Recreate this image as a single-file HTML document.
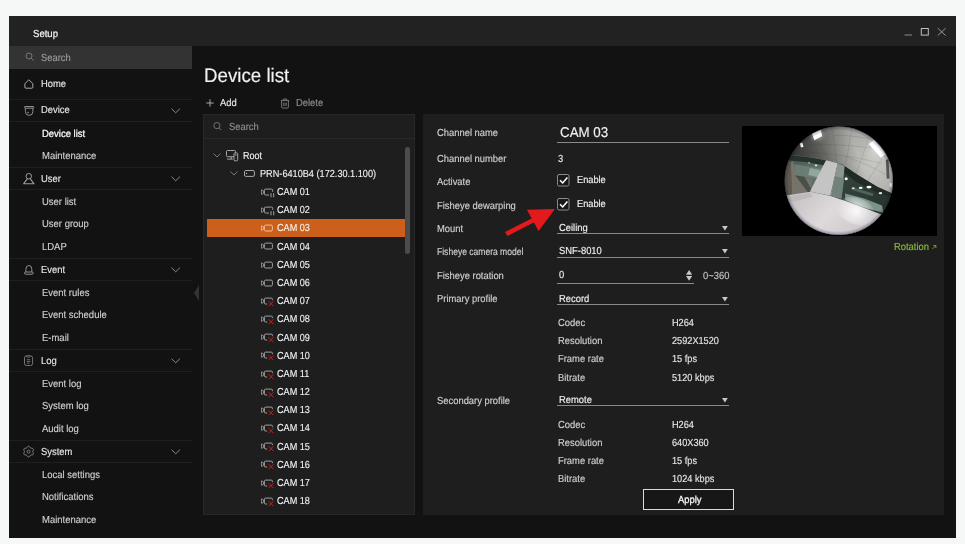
<!DOCTYPE html>
<html><head><meta charset="utf-8"><title>Setup</title><style>
*{box-sizing:border-box;margin:0;padding:0}
html,body{width:965px;height:544px;overflow:hidden}
body{background:#f6f8f8;font-family:"Liberation Sans",sans-serif;color:#d6d6d6;font-size:10.2px;position:relative;text-rendering:geometricPrecision}
.abs{position:absolute}
.t{position:absolute;white-space:nowrap;line-height:14px;height:14px;transform-origin:0 50%;-webkit-text-stroke:0.15px currentColor}
#win{position:absolute;left:9px;top:16px;width:947px;height:522.3px;background:#121212}
#title{position:absolute;left:0;top:0;width:947px;height:30px;background:#222222}
#side{position:absolute;left:0;top:30px;width:183px;height:492px;background:#121212}
.hr{position:absolute;left:0;width:183px;height:1px;background:#1f1f1f}
.panel{position:absolute;background:#1e1e1e}
.ul{position:absolute;height:1px;background:#8a8a8a}
svg{position:absolute;overflow:visible}
</style></head><body>
<div id="win"><div id="title"></div></div>
<div class="abs" style="left:9px;top:46px;width:183px;height:23px;background:#333333"></div>
<svg style="left:24.5px;top:52px" width="10" height="10" viewBox="0 0 10 10"><circle cx="4" cy="4" r="3" fill="none" stroke="#767676" stroke-width="1"/><path d="M6.2 6.2L8.6 8.6" stroke="#767676" stroke-width="1" fill="none"/></svg>
<div class="t" style="left:41px;top:52px;font-size:10.2px;color:#9a9a9a;font-weight:400;letter-spacing:0px;transform:scaleX(0.922);">Search</div>
<div class="t" style="left:32.5px;top:28px;font-size:10.2px;color:#f4f4f4;font-weight:400;letter-spacing:0px;transform:scaleX(0.94);-webkit-text-stroke:0.22px #f4f4f4;">Setup</div>
<svg style="left:900px;top:24px" width="50" height="16" viewBox="0 0 50 16"><path d="M4.5 11H12" stroke="#8c8c8c" stroke-width="1" fill="none"/><rect x="21.3" y="4.5" width="7" height="6.6" fill="none" stroke="#c0c0c0" stroke-width="1"/><path d="M37.7 4.2L45.7 11.6M45.7 4.2L37.7 11.6" stroke="#a0a0a0" stroke-width="0.9" fill="none"/></svg>
<svg style="left:24.1px;top:84px;margin-top:-5px" width="10" height="10" viewBox="0 0 10 10"><path d="M0.9 4.6L4.85 0.8L8.8 4.6V8.3Q8.8 9.2 7.9 9.2H1.8Q0.9 9.2 0.9 8.3Z" fill="none" stroke="#a8a8a8" stroke-width="1" stroke-linejoin="round"/></svg>
<div class="t" style="left:41px;top:78px;font-size:10.2px;color:#e4e4e4;font-weight:400;letter-spacing:0px;transform:scaleX(0.922);">Home</div>
<div class="hr" style="left:9px;top:98.75px"></div>
<svg style="left:23.5px;top:110.375px;margin-top:-4.6px" width="11" height="10" viewBox="0 0 11 10"><rect x="0.5" y="0.5" width="9.3" height="1.7" rx="0.6" fill="none" stroke="#909090" stroke-width="1"/><path d="M1.4 2.2V5.4Q1.4 9.4 5.15 9.4Q8.9 9.4 8.9 5.4V2.2" fill="none" stroke="#909090" stroke-width="1"/><circle cx="4.1" cy="6.5" r="0.65" fill="#b0b0b0"/></svg>
<div class="t" style="left:41px;top:104px;font-size:10.2px;color:#e4e4e4;font-weight:400;letter-spacing:0px;transform:scaleX(0.922);">Device</div>
<svg style="left:170.5px;top:107.875px" width="10" height="6" viewBox="0 0 10 6"><path d="M0.5 0.7L4.7 4.8L8.9 0.7" fill="none" stroke="#8c8c8c" stroke-width="1"/></svg>
<div class="hr" style="left:9px;top:121.0px"></div>
<div class="t" style="left:42.1px;top:128px;font-size:10.2px;color:#ffffff;font-weight:400;letter-spacing:0px;transform:scaleX(0.93);-webkit-text-stroke:0.24px #fff;">Device list</div>
<div class="t" style="left:42.1px;top:150px;font-size:10.2px;color:#cfcfcf;font-weight:400;letter-spacing:0px;transform:scaleX(0.93);">Maintenance</div>
<div class="hr" style="left:9px;top:167.1px"></div>
<svg style="left:22.8px;top:178.55px;margin-top:-5.9px" width="12" height="12" viewBox="0 0 12 12"><circle cx="5.75" cy="3.2" r="2.75" fill="none" stroke="#9c9c9c" stroke-width="1"/><path d="M4.5 5.7L0.7 10.7H10.9L7.1 5.7" fill="none" stroke="#9c9c9c" stroke-width="1.1" stroke-linejoin="round"/></svg>
<div class="t" style="left:41px;top:173px;font-size:10.2px;color:#e4e4e4;font-weight:400;letter-spacing:0px;transform:scaleX(0.922);">User</div>
<svg style="left:170.5px;top:176.05px" width="10" height="6" viewBox="0 0 10 6"><path d="M0.5 0.7L4.7 4.8L8.9 0.7" fill="none" stroke="#8c8c8c" stroke-width="1"/></svg>
<div class="hr" style="left:9px;top:189.0px"></div>
<div class="t" style="left:42.1px;top:196px;font-size:10.2px;color:#cfcfcf;font-weight:400;letter-spacing:0px;transform:scaleX(0.93);">User list</div>
<div class="t" style="left:42.1px;top:218px;font-size:10.2px;color:#cfcfcf;font-weight:400;letter-spacing:0px;transform:scaleX(0.93);">User group</div>
<div class="t" style="left:42.1px;top:241px;font-size:10.2px;color:#cfcfcf;font-weight:400;letter-spacing:0px;transform:scaleX(0.93);">LDAP</div>
<div class="hr" style="left:9px;top:258.0px"></div>
<svg style="left:23.8px;top:269.5px;margin-top:-4.4px" width="10" height="10" viewBox="0 0 10 10"><path d="M1.9 7V4.2Q1.9 0.5 4.85 0.5Q7.8 0.5 7.8 4.2V7" fill="none" stroke="#909090" stroke-width="1"/><rect x="0.5" y="7" width="8.7" height="2.2" rx="1" fill="none" stroke="#909090" stroke-width="1"/></svg>
<div class="t" style="left:41px;top:264px;font-size:10.2px;color:#e4e4e4;font-weight:400;letter-spacing:0px;transform:scaleX(0.922);">Event</div>
<svg style="left:170.5px;top:267.0px" width="10" height="6" viewBox="0 0 10 6"><path d="M0.5 0.7L4.7 4.8L8.9 0.7" fill="none" stroke="#8c8c8c" stroke-width="1"/></svg>
<div class="hr" style="left:9px;top:280.0px"></div>
<div class="t" style="left:42.1px;top:287px;font-size:10.2px;color:#cfcfcf;font-weight:400;letter-spacing:0px;transform:scaleX(0.93);">Event rules</div>
<div class="t" style="left:42.1px;top:309px;font-size:10.2px;color:#cfcfcf;font-weight:400;letter-spacing:0px;transform:scaleX(0.93);">Event schedule</div>
<div class="t" style="left:42.1px;top:332px;font-size:10.2px;color:#cfcfcf;font-weight:400;letter-spacing:0px;transform:scaleX(0.93);">E-mail</div>
<div class="hr" style="left:9px;top:349.0px"></div>
<svg style="left:24.1px;top:360.5px;margin-top:-5.5px" width="10" height="11" viewBox="0 0 10 11"><rect x="0.5" y="0.9" width="8.1" height="9.6" rx="2" fill="none" stroke="#767676" stroke-width="1"/><ellipse cx="4.55" cy="1.4" rx="1.9" ry="0.8" fill="#121212" stroke="#767676" stroke-width="0.9"/><path d="M2.8 4.7H6.2M2.8 6.4H6.4M2.8 8.1H5.4" fill="none" stroke="#6a6a6a" stroke-width="1"/></svg>
<div class="t" style="left:41px;top:355px;font-size:10.2px;color:#e4e4e4;font-weight:400;letter-spacing:0px;transform:scaleX(0.922);">Log</div>
<svg style="left:170.5px;top:358.0px" width="10" height="6" viewBox="0 0 10 6"><path d="M0.5 0.7L4.7 4.8L8.9 0.7" fill="none" stroke="#8c8c8c" stroke-width="1"/></svg>
<div class="hr" style="left:9px;top:371.0px"></div>
<div class="t" style="left:42.1px;top:378px;font-size:10.2px;color:#cfcfcf;font-weight:400;letter-spacing:0px;transform:scaleX(0.93);">Event log</div>
<div class="t" style="left:42.1px;top:400px;font-size:10.2px;color:#cfcfcf;font-weight:400;letter-spacing:0px;transform:scaleX(0.93);">System log</div>
<div class="t" style="left:42.1px;top:423px;font-size:10.2px;color:#cfcfcf;font-weight:400;letter-spacing:0px;transform:scaleX(0.93);">Audit log</div>
<div class="hr" style="left:9px;top:440.0px"></div>
<svg style="left:23.15px;top:451.5px;margin-top:-5.5px" width="11.2" height="11.2" viewBox="0 0 11.2 11.2"><path d="M5.60 0.23L6.06 0.33L6.48 0.62L6.83 1.01L7.12 1.43L7.38 1.78L7.66 2.02L8.02 2.15L8.45 2.20L8.96 2.24L9.48 2.35L9.93 2.57L10.25 2.91L10.39 3.37L10.35 3.87L10.19 4.37L9.97 4.83L9.80 5.23L9.73 5.60L9.80 5.97L9.97 6.37L10.19 6.83L10.35 7.33L10.39 7.83L10.25 8.28L9.93 8.63L9.48 8.85L8.96 8.96L8.45 9.00L8.02 9.05L7.67 9.18L7.38 9.42L7.12 9.77L6.83 10.19L6.48 10.58L6.06 10.87L5.60 10.97L5.14 10.87L4.72 10.58L4.37 10.19L4.08 9.77L3.82 9.42L3.53 9.18L3.18 9.05L2.75 9.00L2.24 8.96L1.72 8.85L1.27 8.63L0.95 8.29L0.81 7.83L0.85 7.33L1.01 6.83L1.23 6.37L1.40 5.97L1.47 5.60L1.40 5.23L1.23 4.83L1.01 4.37L0.85 3.87L0.81 3.37L0.95 2.92L1.27 2.57L1.72 2.35L2.24 2.24L2.75 2.20L3.18 2.15L3.54 2.02L3.82 1.78L4.08 1.43L4.37 1.01L4.72 0.62L5.14 0.33Z" fill="none" stroke="#868686" stroke-width="1" stroke-linejoin="round"/><circle cx="5.6" cy="5.6" r="1.5" fill="none" stroke="#868686" stroke-width="0.9"/></svg>
<div class="t" style="left:41px;top:446px;font-size:10.2px;color:#e4e4e4;font-weight:400;letter-spacing:0px;transform:scaleX(0.922);">System</div>
<svg style="left:170.5px;top:449.0px" width="10" height="6" viewBox="0 0 10 6"><path d="M0.5 0.7L4.7 4.8L8.9 0.7" fill="none" stroke="#8c8c8c" stroke-width="1"/></svg>
<div class="hr" style="left:9px;top:462.0px"></div>
<div class="t" style="left:42.1px;top:469px;font-size:10.2px;color:#cfcfcf;font-weight:400;letter-spacing:0px;transform:scaleX(0.93);">Local settings</div>
<div class="t" style="left:42.1px;top:491px;font-size:10.2px;color:#cfcfcf;font-weight:400;letter-spacing:0px;transform:scaleX(0.93);">Notifications</div>
<div class="t" style="left:42.1px;top:514px;font-size:10.2px;color:#cfcfcf;font-weight:400;letter-spacing:0px;transform:scaleX(0.93);">Maintenance</div>
<svg style="left:193.7px;top:285px" width="5" height="16" viewBox="0 0 5 16"><path d="M5 0V16L0 8Z" fill="#333333"/></svg>
<div class="t" style="left:204px;top:69px;font-size:19.5px;color:#f2f2f2;font-weight:400;letter-spacing:0px;transform:scaleX(0.96);">Device list</div>
<svg style="left:206px;top:99px" width="8" height="8" viewBox="0 0 8 8"><path d="M4 0.3V7.7M0.3 4H7.7" stroke="#b8b8b8" stroke-width="0.9" fill="none"/></svg>
<div class="t" style="left:219.7px;top:97px;font-size:10.2px;color:#e6e6e6;font-weight:400;letter-spacing:0px;transform:scaleX(0.922);">Add</div>
<svg style="left:280.4px;top:97.6px" width="10" height="11" viewBox="0 0 10 11"><path d="M0.8 2.5H9.2M3.3 2.5V1H6.7V2.5M1.6 2.5V9Q1.6 10 2.6 10H7.4Q8.4 10 8.4 9V2.5" fill="none" stroke="#747474" stroke-width="1"/><path d="M3.3 4.6H4.5V8H3.3ZM5.5 4.6H6.7V8H5.5Z" fill="#747474"/></svg>
<div class="t" style="left:296.2px;top:97px;font-size:10.2px;color:#8e8e8e;font-weight:400;letter-spacing:0px;transform:scaleX(0.922);">Delete</div>
<div class="panel" style="left:203px;top:113.9px;width:212px;height:400.7px;border:1px solid #272727"></div>
<div class="abs" style="left:203px;top:137.7px;width:212px;height:1px;background:#282828"></div>
<svg style="left:213px;top:122px" width="9" height="9" viewBox="0 0 9 9"><circle cx="3.9" cy="3.6" r="3.1" fill="none" stroke="#707070" stroke-width="1"/><path d="M6.1 5.9L8.3 8.1" stroke="#707070" stroke-width="1" fill="none"/></svg>
<div class="t" style="left:228.5px;top:121px;font-size:10.2px;color:#8e8e8e;font-weight:400;letter-spacing:0px;transform:scaleX(0.922);">Search</div>
<div class="abs" style="left:405px;top:146.7px;width:5.2px;height:107px;background:#4c4c4c;border-radius:2.6px"></div>
<svg style="left:213px;top:153.0px" width="8" height="5" viewBox="0 0 8 5"><path d="M0.5 0.5L4 4L7.5 0.5" fill="none" stroke="#777" stroke-width="1"/></svg>
<svg style="left:226px;top:149.5px" width="12.5" height="11.5" viewBox="0 0 12.5 11.5"><rect x="0.5" y="0.5" width="9.1" height="6.2" rx="1" fill="none" stroke="#a6a6a6" stroke-width="1"/><path d="M1 9.1H6.8M5.2 6.7V9.1" fill="none" stroke="#a6a6a6" stroke-width="1"/><rect x="8" y="2.9" width="3.7" height="7.9" rx="1" fill="#1e1e1e" stroke="#a6a6a6" stroke-width="1"/><circle cx="9.85" cy="4.9" r="0.6" fill="#e0e0e0"/></svg>
<div class="t" style="left:242.8px;top:150px;font-size:10.2px;color:#f2f2f2;font-weight:400;letter-spacing:0px;transform:scaleX(0.885);-webkit-text-stroke:0.12px #f2f2f2;">Root</div>
<svg style="left:230px;top:171.17000000000002px" width="8" height="5" viewBox="0 0 8 5"><path d="M0.5 0.5L4 4L7.5 0.5" fill="none" stroke="#777" stroke-width="1"/></svg>
<svg style="left:244px;top:170.37px" width="11" height="7" viewBox="0 0 11 7"><rect x="0.5" y="0.5" width="9.9" height="5.9" rx="1.4" fill="none" stroke="#a8a8a8" stroke-width="1"/><circle cx="2.6" cy="3.45" r="0.6" fill="#d0d0d0"/></svg>
<div class="t" style="left:259.5px;top:168px;font-size:10.2px;color:#f2f2f2;font-weight:400;letter-spacing:0px;transform:scaleX(0.899);-webkit-text-stroke:0.12px #f2f2f2;">PRN-6410B4 (172.30.1.100)</div>
<svg style="left:260.5px;top:187.84px" width="14" height="10" viewBox="0 0 14 10"><path d="M0.5 1.8V6.4L2.5 5.4V2.8Z" fill="none" stroke="#a0a0a0" stroke-width="0.8" stroke-linejoin="round"/><path d="M8 7H4.5Q3.4 7 3.4 5.9V2.2Q3.4 1.1 4.5 1.1H10.6Q11.7 1.1 11.7 2.2V3.8" fill="none" stroke="#a0a0a0" stroke-width="1"/><path d="M10 5.2V9.3M12.7 5.2V9.3" stroke="#a0a0a0" stroke-width="1"/></svg>
<div class="t" style="left:277.2px;top:186px;font-size:10.2px;color:#f2f2f2;font-weight:400;letter-spacing:0px;transform:scaleX(0.895);-webkit-text-stroke:0.12px #f2f2f2;">CAM 01</div>
<svg style="left:260.5px;top:206.01px" width="14" height="10" viewBox="0 0 14 10"><path d="M0.5 1.8V6.4L2.5 5.4V2.8Z" fill="none" stroke="#a0a0a0" stroke-width="0.8" stroke-linejoin="round"/><path d="M8 7H4.5Q3.4 7 3.4 5.9V2.2Q3.4 1.1 4.5 1.1H10.6Q11.7 1.1 11.7 2.2V3.8" fill="none" stroke="#a0a0a0" stroke-width="1"/><path d="M10 5.2V9.3M12.7 5.2V9.3" stroke="#a0a0a0" stroke-width="1"/></svg>
<div class="t" style="left:277.2px;top:204px;font-size:10.2px;color:#f2f2f2;font-weight:400;letter-spacing:0px;transform:scaleX(0.895);-webkit-text-stroke:0.12px #f2f2f2;">CAM 02</div>
<div class="abs" style="left:207.25px;top:219.48px;width:198px;height:17.6px;background:#cc601a"></div>
<svg style="left:260.5px;top:224.18px" width="14" height="10" viewBox="0 0 14 10"><path d="M0.5 1.8V6.4L2.5 5.4V2.8Z" fill="none" stroke="#ecc0a2" stroke-width="0.8" stroke-linejoin="round"/><rect x="3.4" y="1.1" width="8" height="5.9" rx="1.3" fill="none" stroke="#ecc0a2" stroke-width="1"/></svg>
<div class="t" style="left:277.2px;top:222px;font-size:10.2px;color:#f2f2f2;font-weight:400;letter-spacing:0px;transform:scaleX(0.895);-webkit-text-stroke:0.12px #f2f2f2;">CAM 03</div>
<svg style="left:260.5px;top:242.35px" width="14" height="10" viewBox="0 0 14 10"><path d="M0.5 1.8V6.4L2.5 5.4V2.8Z" fill="none" stroke="#a0a0a0" stroke-width="0.8" stroke-linejoin="round"/><rect x="3.4" y="1.1" width="8" height="5.9" rx="1.3" fill="none" stroke="#a0a0a0" stroke-width="1"/></svg>
<div class="t" style="left:277.2px;top:241px;font-size:10.2px;color:#f2f2f2;font-weight:400;letter-spacing:0px;transform:scaleX(0.895);-webkit-text-stroke:0.12px #f2f2f2;">CAM 04</div>
<svg style="left:260.5px;top:260.52px" width="14" height="10" viewBox="0 0 14 10"><path d="M0.5 1.8V6.4L2.5 5.4V2.8Z" fill="none" stroke="#a0a0a0" stroke-width="0.8" stroke-linejoin="round"/><rect x="3.4" y="1.1" width="8" height="5.9" rx="1.3" fill="none" stroke="#a0a0a0" stroke-width="1"/></svg>
<div class="t" style="left:277.2px;top:259px;font-size:10.2px;color:#f2f2f2;font-weight:400;letter-spacing:0px;transform:scaleX(0.895);-webkit-text-stroke:0.12px #f2f2f2;">CAM 05</div>
<svg style="left:260.5px;top:278.69px" width="14" height="10" viewBox="0 0 14 10"><path d="M0.5 1.8V6.4L2.5 5.4V2.8Z" fill="none" stroke="#a0a0a0" stroke-width="0.8" stroke-linejoin="round"/><rect x="3.4" y="1.1" width="8" height="5.9" rx="1.3" fill="none" stroke="#a0a0a0" stroke-width="1"/></svg>
<div class="t" style="left:277.2px;top:277px;font-size:10.2px;color:#f2f2f2;font-weight:400;letter-spacing:0px;transform:scaleX(0.895);-webkit-text-stroke:0.12px #f2f2f2;">CAM 06</div>
<svg style="left:260.5px;top:296.86px" width="14" height="10" viewBox="0 0 14 10"><path d="M0.5 1.8V6.4L2.5 5.4V2.8Z" fill="none" stroke="#a0a0a0" stroke-width="0.8" stroke-linejoin="round"/><path d="M6.2 7H4.5Q3.4 7 3.4 5.9V2.2Q3.4 1.1 4.5 1.1H10.3Q11.4 1.1 11.4 2.2V3.2" fill="none" stroke="#a0a0a0" stroke-width="1"/><path d="M7.7 4.3L12.4 9.1M12.4 4.3L7.7 9.1" stroke="#e01818" stroke-width="0.95"/></svg>
<div class="t" style="left:277.2px;top:295px;font-size:10.2px;color:#f2f2f2;font-weight:400;letter-spacing:0px;transform:scaleX(0.895);-webkit-text-stroke:0.12px #f2f2f2;">CAM 07</div>
<svg style="left:260.5px;top:315.03px" width="14" height="10" viewBox="0 0 14 10"><path d="M0.5 1.8V6.4L2.5 5.4V2.8Z" fill="none" stroke="#a0a0a0" stroke-width="0.8" stroke-linejoin="round"/><path d="M6.2 7H4.5Q3.4 7 3.4 5.9V2.2Q3.4 1.1 4.5 1.1H10.3Q11.4 1.1 11.4 2.2V3.2" fill="none" stroke="#a0a0a0" stroke-width="1"/><path d="M7.7 4.3L12.4 9.1M12.4 4.3L7.7 9.1" stroke="#e01818" stroke-width="0.95"/></svg>
<div class="t" style="left:277.2px;top:313px;font-size:10.2px;color:#f2f2f2;font-weight:400;letter-spacing:0px;transform:scaleX(0.895);-webkit-text-stroke:0.12px #f2f2f2;">CAM 08</div>
<svg style="left:260.5px;top:333.20px" width="14" height="10" viewBox="0 0 14 10"><path d="M0.5 1.8V6.4L2.5 5.4V2.8Z" fill="none" stroke="#a0a0a0" stroke-width="0.8" stroke-linejoin="round"/><path d="M6.2 7H4.5Q3.4 7 3.4 5.9V2.2Q3.4 1.1 4.5 1.1H10.3Q11.4 1.1 11.4 2.2V3.2" fill="none" stroke="#a0a0a0" stroke-width="1"/><path d="M7.7 4.3L12.4 9.1M12.4 4.3L7.7 9.1" stroke="#e01818" stroke-width="0.95"/></svg>
<div class="t" style="left:277.2px;top:332px;font-size:10.2px;color:#f2f2f2;font-weight:400;letter-spacing:0px;transform:scaleX(0.895);-webkit-text-stroke:0.12px #f2f2f2;">CAM 09</div>
<svg style="left:260.5px;top:351.37px" width="14" height="10" viewBox="0 0 14 10"><path d="M0.5 1.8V6.4L2.5 5.4V2.8Z" fill="none" stroke="#a0a0a0" stroke-width="0.8" stroke-linejoin="round"/><path d="M6.2 7H4.5Q3.4 7 3.4 5.9V2.2Q3.4 1.1 4.5 1.1H10.3Q11.4 1.1 11.4 2.2V3.2" fill="none" stroke="#a0a0a0" stroke-width="1"/><path d="M7.7 4.3L12.4 9.1M12.4 4.3L7.7 9.1" stroke="#e01818" stroke-width="0.95"/></svg>
<div class="t" style="left:277.2px;top:350px;font-size:10.2px;color:#f2f2f2;font-weight:400;letter-spacing:0px;transform:scaleX(0.895);-webkit-text-stroke:0.12px #f2f2f2;">CAM 10</div>
<svg style="left:260.5px;top:369.54px" width="14" height="10" viewBox="0 0 14 10"><path d="M0.5 1.8V6.4L2.5 5.4V2.8Z" fill="none" stroke="#a0a0a0" stroke-width="0.8" stroke-linejoin="round"/><path d="M6.2 7H4.5Q3.4 7 3.4 5.9V2.2Q3.4 1.1 4.5 1.1H10.3Q11.4 1.1 11.4 2.2V3.2" fill="none" stroke="#a0a0a0" stroke-width="1"/><path d="M7.7 4.3L12.4 9.1M12.4 4.3L7.7 9.1" stroke="#e01818" stroke-width="0.95"/></svg>
<div class="t" style="left:277.2px;top:368px;font-size:10.2px;color:#f2f2f2;font-weight:400;letter-spacing:0px;transform:scaleX(0.895);-webkit-text-stroke:0.12px #f2f2f2;">CAM 11</div>
<svg style="left:260.5px;top:387.71px" width="14" height="10" viewBox="0 0 14 10"><path d="M0.5 1.8V6.4L2.5 5.4V2.8Z" fill="none" stroke="#a0a0a0" stroke-width="0.8" stroke-linejoin="round"/><path d="M6.2 7H4.5Q3.4 7 3.4 5.9V2.2Q3.4 1.1 4.5 1.1H10.3Q11.4 1.1 11.4 2.2V3.2" fill="none" stroke="#a0a0a0" stroke-width="1"/><path d="M7.7 4.3L12.4 9.1M12.4 4.3L7.7 9.1" stroke="#e01818" stroke-width="0.95"/></svg>
<div class="t" style="left:277.2px;top:386px;font-size:10.2px;color:#f2f2f2;font-weight:400;letter-spacing:0px;transform:scaleX(0.895);-webkit-text-stroke:0.12px #f2f2f2;">CAM 12</div>
<svg style="left:260.5px;top:405.88px" width="14" height="10" viewBox="0 0 14 10"><path d="M0.5 1.8V6.4L2.5 5.4V2.8Z" fill="none" stroke="#a0a0a0" stroke-width="0.8" stroke-linejoin="round"/><path d="M6.2 7H4.5Q3.4 7 3.4 5.9V2.2Q3.4 1.1 4.5 1.1H10.3Q11.4 1.1 11.4 2.2V3.2" fill="none" stroke="#a0a0a0" stroke-width="1"/><path d="M7.7 4.3L12.4 9.1M12.4 4.3L7.7 9.1" stroke="#e01818" stroke-width="0.95"/></svg>
<div class="t" style="left:277.2px;top:404px;font-size:10.2px;color:#f2f2f2;font-weight:400;letter-spacing:0px;transform:scaleX(0.895);-webkit-text-stroke:0.12px #f2f2f2;">CAM 13</div>
<svg style="left:260.5px;top:424.05px" width="14" height="10" viewBox="0 0 14 10"><path d="M0.5 1.8V6.4L2.5 5.4V2.8Z" fill="none" stroke="#a0a0a0" stroke-width="0.8" stroke-linejoin="round"/><path d="M6.2 7H4.5Q3.4 7 3.4 5.9V2.2Q3.4 1.1 4.5 1.1H10.3Q11.4 1.1 11.4 2.2V3.2" fill="none" stroke="#a0a0a0" stroke-width="1"/><path d="M7.7 4.3L12.4 9.1M12.4 4.3L7.7 9.1" stroke="#e01818" stroke-width="0.95"/></svg>
<div class="t" style="left:277.2px;top:422px;font-size:10.2px;color:#f2f2f2;font-weight:400;letter-spacing:0px;transform:scaleX(0.895);-webkit-text-stroke:0.12px #f2f2f2;">CAM 14</div>
<svg style="left:260.5px;top:442.22px" width="14" height="10" viewBox="0 0 14 10"><path d="M0.5 1.8V6.4L2.5 5.4V2.8Z" fill="none" stroke="#a0a0a0" stroke-width="0.8" stroke-linejoin="round"/><path d="M6.2 7H4.5Q3.4 7 3.4 5.9V2.2Q3.4 1.1 4.5 1.1H10.3Q11.4 1.1 11.4 2.2V3.2" fill="none" stroke="#a0a0a0" stroke-width="1"/><path d="M7.7 4.3L12.4 9.1M12.4 4.3L7.7 9.1" stroke="#e01818" stroke-width="0.95"/></svg>
<div class="t" style="left:277.2px;top:441px;font-size:10.2px;color:#f2f2f2;font-weight:400;letter-spacing:0px;transform:scaleX(0.895);-webkit-text-stroke:0.12px #f2f2f2;">CAM 15</div>
<svg style="left:260.5px;top:460.39px" width="14" height="10" viewBox="0 0 14 10"><path d="M0.5 1.8V6.4L2.5 5.4V2.8Z" fill="none" stroke="#a0a0a0" stroke-width="0.8" stroke-linejoin="round"/><path d="M6.2 7H4.5Q3.4 7 3.4 5.9V2.2Q3.4 1.1 4.5 1.1H10.3Q11.4 1.1 11.4 2.2V3.2" fill="none" stroke="#a0a0a0" stroke-width="1"/><path d="M7.7 4.3L12.4 9.1M12.4 4.3L7.7 9.1" stroke="#e01818" stroke-width="0.95"/></svg>
<div class="t" style="left:277.2px;top:459px;font-size:10.2px;color:#f2f2f2;font-weight:400;letter-spacing:0px;transform:scaleX(0.895);-webkit-text-stroke:0.12px #f2f2f2;">CAM 16</div>
<svg style="left:260.5px;top:478.56px" width="14" height="10" viewBox="0 0 14 10"><path d="M0.5 1.8V6.4L2.5 5.4V2.8Z" fill="none" stroke="#a0a0a0" stroke-width="0.8" stroke-linejoin="round"/><path d="M6.2 7H4.5Q3.4 7 3.4 5.9V2.2Q3.4 1.1 4.5 1.1H10.3Q11.4 1.1 11.4 2.2V3.2" fill="none" stroke="#a0a0a0" stroke-width="1"/><path d="M7.7 4.3L12.4 9.1M12.4 4.3L7.7 9.1" stroke="#e01818" stroke-width="0.95"/></svg>
<div class="t" style="left:277.2px;top:477px;font-size:10.2px;color:#f2f2f2;font-weight:400;letter-spacing:0px;transform:scaleX(0.895);-webkit-text-stroke:0.12px #f2f2f2;">CAM 17</div>
<svg style="left:260.5px;top:496.73px" width="14" height="10" viewBox="0 0 14 10"><path d="M0.5 1.8V6.4L2.5 5.4V2.8Z" fill="none" stroke="#a0a0a0" stroke-width="0.8" stroke-linejoin="round"/><path d="M6.2 7H4.5Q3.4 7 3.4 5.9V2.2Q3.4 1.1 4.5 1.1H10.3Q11.4 1.1 11.4 2.2V3.2" fill="none" stroke="#a0a0a0" stroke-width="1"/><path d="M7.7 4.3L12.4 9.1M12.4 4.3L7.7 9.1" stroke="#e01818" stroke-width="0.95"/></svg>
<div class="t" style="left:277.2px;top:495px;font-size:10.2px;color:#f2f2f2;font-weight:400;letter-spacing:0px;transform:scaleX(0.895);-webkit-text-stroke:0.12px #f2f2f2;">CAM 18</div>
<div class="panel" style="left:423px;top:113.9px;width:521px;height:400.8px"></div>
<div class="t" style="left:436.6px;top:127px;font-size:10.2px;color:#d0d0d0;font-weight:400;letter-spacing:0px;transform:scaleX(0.922);">Channel name</div>
<div class="t" style="left:559.5px;top:126px;font-size:14.2px;color:#f0f0f0;font-weight:400;letter-spacing:0px;transform:scaleX(0.94);">CAM 03</div>
<div class="ul" style="left:556.8px;top:141.7px;width:172.6px"></div>
<div class="t" style="left:436.6px;top:153px;font-size:10.2px;color:#d0d0d0;font-weight:400;letter-spacing:0px;transform:scaleX(0.922);">Channel number</div>
<div class="t" style="left:558px;top:153px;font-size:10.2px;color:#e6e6e6;font-weight:400;letter-spacing:0px;transform:scaleX(0.922);">3</div>
<div class="t" style="left:436.6px;top:176px;font-size:10.2px;color:#d0d0d0;font-weight:400;letter-spacing:0px;transform:scaleX(0.922);">Activate</div>
<svg style="left:556.5px;top:174.2px" width="12.5" height="12.5" viewBox="0 0 12.5 12.5"><rect x="0.5" y="0.5" width="11.5" height="11.5" rx="1.5" fill="#191919" stroke="#8c8c8c" stroke-width="1"/><path d="M3 6.2L5.7 9L10.4 3.5" fill="none" stroke="#ffffff" stroke-width="1.5"/></svg>
<div class="t" style="left:576.8px;top:174px;font-size:10.2px;color:#ececec;font-weight:400;letter-spacing:0px;transform:scaleX(0.905);-webkit-text-stroke:0.2px #ececec;">Enable</div>
<div class="t" style="left:436.6px;top:200px;font-size:10.2px;color:#d0d0d0;font-weight:400;letter-spacing:0px;transform:scaleX(0.922);">Fisheye dewarping</div>
<svg style="left:556.5px;top:197.5px" width="12.5" height="12.5" viewBox="0 0 12.5 12.5"><rect x="0.5" y="0.5" width="11.5" height="11.5" rx="1.5" fill="#191919" stroke="#8c8c8c" stroke-width="1"/><path d="M3 6.2L5.7 9L10.4 3.5" fill="none" stroke="#ffffff" stroke-width="1.5"/></svg>
<div class="t" style="left:576.8px;top:198px;font-size:10.2px;color:#ececec;font-weight:400;letter-spacing:0px;transform:scaleX(0.905);-webkit-text-stroke:0.2px #ececec;">Enable</div>
<div class="t" style="left:436.6px;top:223px;font-size:10.2px;color:#d0d0d0;font-weight:400;letter-spacing:0px;transform:scaleX(0.922);">Mount</div>
<div class="t" style="left:559.3px;top:222px;font-size:10.2px;color:#f0f0f0;font-weight:400;letter-spacing:0px;transform:scaleX(0.922);">Ceiling</div>
<div class="ul" style="left:556.8px;top:232.9px;width:172.6px"></div>
<svg style="left:721.6px;top:225.5px" width="5.8" height="4.4" viewBox="0 0 5.8 4.4"><path d="M0 0H5.8L2.9 4.4Z" fill="#c8c8c8"/></svg>
<div class="t" style="left:436.6px;top:246px;font-size:10.2px;color:#d0d0d0;font-weight:400;letter-spacing:0px;transform:scaleX(0.838);">Fisheye camera model</div>
<div class="t" style="left:559.3px;top:245px;font-size:10.2px;color:#f0f0f0;font-weight:400;letter-spacing:0px;transform:scaleX(0.922);">SNF-8010</div>
<div class="ul" style="left:556.8px;top:256.5px;width:172.6px"></div>
<svg style="left:721.6px;top:249.1px" width="5.8" height="4.4" viewBox="0 0 5.8 4.4"><path d="M0 0H5.8L2.9 4.4Z" fill="#c8c8c8"/></svg>
<div class="t" style="left:436.6px;top:270px;font-size:10.2px;color:#d0d0d0;font-weight:400;letter-spacing:0px;transform:scaleX(0.922);">Fisheye rotation</div>
<div class="t" style="left:559.3px;top:269px;font-size:10.2px;color:#f0f0f0;font-weight:400;letter-spacing:0px;transform:scaleX(0.922);">0</div>
<div class="ul" style="left:556.8px;top:283.1px;width:137px"></div>
<svg style="left:686.2px;top:270.4px" width="6.2" height="10.8" viewBox="0 0 6.2 10.8"><path d="M0 4.7L3.1 0L6.2 4.7ZM0 6.1L3.1 10.8L6.2 6.1Z" fill="#c8c8c8"/></svg>
<div class="t" style="left:702.8px;top:270px;font-size:10.2px;color:#c4c4c4;font-weight:400;letter-spacing:0px;transform:scaleX(0.922);">0~360</div>
<div class="t" style="left:436.6px;top:293px;font-size:10.2px;color:#d0d0d0;font-weight:400;letter-spacing:0px;transform:scaleX(0.922);">Primary profile</div>
<div class="t" style="left:559.3px;top:293px;font-size:10.2px;color:#f0f0f0;font-weight:400;letter-spacing:0px;transform:scaleX(0.922);">Record</div>
<div class="ul" style="left:556.8px;top:304.0px;width:172.6px"></div>
<svg style="left:721.6px;top:296.6px" width="5.8" height="4.4" viewBox="0 0 5.8 4.4"><path d="M0 0H5.8L2.9 4.4Z" fill="#c8c8c8"/></svg>
<div class="t" style="left:557.8px;top:317px;font-size:10.2px;color:#d0d0d0;font-weight:400;letter-spacing:0px;transform:scaleX(0.922);">Codec</div>
<div class="t" style="left:671.6px;top:317px;font-size:10.2px;color:#e6e6e6;font-weight:400;letter-spacing:0px;transform:scaleX(0.9);">H264</div>
<div class="t" style="left:557.8px;top:335px;font-size:10.2px;color:#d0d0d0;font-weight:400;letter-spacing:0px;transform:scaleX(0.922);">Resolution</div>
<div class="t" style="left:671.6px;top:335px;font-size:10.2px;color:#e6e6e6;font-weight:400;letter-spacing:0px;transform:scaleX(0.9);">2592X1520</div>
<div class="t" style="left:557.8px;top:353px;font-size:10.2px;color:#d0d0d0;font-weight:400;letter-spacing:0px;transform:scaleX(0.922);">Frame rate</div>
<div class="t" style="left:671.6px;top:353px;font-size:10.2px;color:#e6e6e6;font-weight:400;letter-spacing:0px;transform:scaleX(0.9);">15 fps</div>
<div class="t" style="left:557.8px;top:372px;font-size:10.2px;color:#d0d0d0;font-weight:400;letter-spacing:0px;transform:scaleX(0.922);">Bitrate</div>
<div class="t" style="left:671.6px;top:372px;font-size:10.2px;color:#e6e6e6;font-weight:400;letter-spacing:0px;transform:scaleX(0.9);">5120 kbps</div>
<div class="t" style="left:436.6px;top:395px;font-size:10.2px;color:#d0d0d0;font-weight:400;letter-spacing:0px;transform:scaleX(0.922);">Secondary profile</div>
<div class="t" style="left:559.3px;top:394px;font-size:10.2px;color:#f0f0f0;font-weight:400;letter-spacing:0px;transform:scaleX(0.922);">Remote</div>
<div class="ul" style="left:556.8px;top:405.3px;width:172.6px"></div>
<svg style="left:721.6px;top:397.90000000000003px" width="5.8" height="4.4" viewBox="0 0 5.8 4.4"><path d="M0 0H5.8L2.9 4.4Z" fill="#c8c8c8"/></svg>
<div class="t" style="left:557.8px;top:419px;font-size:10.2px;color:#d0d0d0;font-weight:400;letter-spacing:0px;transform:scaleX(0.922);">Codec</div>
<div class="t" style="left:671.6px;top:419px;font-size:10.2px;color:#e6e6e6;font-weight:400;letter-spacing:0px;transform:scaleX(0.9);">H264</div>
<div class="t" style="left:557.8px;top:437px;font-size:10.2px;color:#d0d0d0;font-weight:400;letter-spacing:0px;transform:scaleX(0.922);">Resolution</div>
<div class="t" style="left:671.6px;top:437px;font-size:10.2px;color:#e6e6e6;font-weight:400;letter-spacing:0px;transform:scaleX(0.9);">640X360</div>
<div class="t" style="left:557.8px;top:455px;font-size:10.2px;color:#d0d0d0;font-weight:400;letter-spacing:0px;transform:scaleX(0.922);">Frame rate</div>
<div class="t" style="left:671.6px;top:455px;font-size:10.2px;color:#e6e6e6;font-weight:400;letter-spacing:0px;transform:scaleX(0.9);">15 fps</div>
<div class="t" style="left:557.8px;top:473px;font-size:10.2px;color:#d0d0d0;font-weight:400;letter-spacing:0px;transform:scaleX(0.922);">Bitrate</div>
<div class="t" style="left:671.6px;top:473px;font-size:10.2px;color:#e6e6e6;font-weight:400;letter-spacing:0px;transform:scaleX(0.9);">1024 kbps</div>
<div class="abs" style="left:643px;top:489.2px;width:90.8px;height:20.6px;border:1px solid #dcdcdc;background:#171717"></div>
<div class="t" style="left:678.3px;top:494px;font-size:10.2px;color:#f4f4f4;font-weight:400;letter-spacing:0px;transform:scaleX(0.922);-webkit-text-stroke:0.3px #f4f4f4;">Apply</div>
<svg style="left:500px;top:200px" width="62" height="42" viewBox="500 200 62 42"><path d="M506.2 234L536 218.7" stroke="#e21a1c" stroke-width="4.6" fill="none"/><path d="M555 209.1L526.9 209.8L538.6 231Z" fill="#e21a1c"/></svg>
<div class="abs" style="left:741.6px;top:126px;width:195.2px;height:110px;background:#000"></div>
<svg style="left:780px;top:122px" width="120" height="118" viewBox="0 0 553 544">
<defs>
<clipPath id="fc"><circle cx="271" cy="271" r="250"/></clipPath>
<radialGradient id="fg1" gradientUnits="userSpaceOnUse" cx="430" cy="200" r="420"><stop offset="0" stop-color="#c6c6c2"/><stop offset="0.35" stop-color="#aeaeaa"/><stop offset="0.7" stop-color="#8a8a86"/><stop offset="1" stop-color="#5a5a57"/></radialGradient>
<linearGradient id="fg2" gradientUnits="userSpaceOnUse" x1="30" y1="200" x2="520" y2="400"><stop offset="0" stop-color="#4c5850"/><stop offset="0.3" stop-color="#5f726a"/><stop offset="0.5" stop-color="#34413b"/><stop offset="1" stop-color="#27332e"/></linearGradient>
<linearGradient id="fg3" gradientUnits="userSpaceOnUse" x1="100" y1="330" x2="330" y2="530"><stop offset="0" stop-color="#c9c5c7"/><stop offset="0.5" stop-color="#dedadc"/><stop offset="1" stop-color="#cfcacd"/></linearGradient>
<radialGradient id="fg4" gradientUnits="userSpaceOnUse" cx="350" cy="410" r="90"><stop offset="0" stop-color="#ffffff" stop-opacity="0.9"/><stop offset="1" stop-color="#ffffff" stop-opacity="0"/></radialGradient>
<radialGradient id="fg5" gradientUnits="userSpaceOnUse" cx="271" cy="271" r="250"><stop offset="0.93" stop-color="#000" stop-opacity="0"/><stop offset="0.985" stop-color="#101030" stop-opacity="0.25"/><stop offset="1" stop-color="#1a1a50" stop-opacity="0.7"/></radialGradient>
<filter id="fb" x="-5%" y="-5%" width="110%" height="110%"><feGaussianBlur stdDeviation="2.6"/></filter>
<linearGradient id="fg6" gradientUnits="userSpaceOnUse" x1="40" y1="190" x2="330" y2="80"><stop offset="0" stop-color="#242422" stop-opacity="0.85"/><stop offset="0.45" stop-color="#30302e" stop-opacity="0.6"/><stop offset="0.8" stop-color="#3a3a38" stop-opacity="0.22"/><stop offset="1" stop-color="#3a3a38" stop-opacity="0"/></linearGradient>
<radialGradient id="fg7"><stop offset="0" stop-color="#fff" stop-opacity="0.55"/><stop offset="0.5" stop-color="#fff" stop-opacity="0.18"/><stop offset="1" stop-color="#fff" stop-opacity="0"/></radialGradient>
</defs>
<g clip-path="url(#fc)">
<g filter="url(#fb)">
<rect x="0" y="0" width="553" height="544" fill="url(#fg1)"/>
<rect x="0" y="0" width="553" height="300" fill="url(#fg6)"/>
<g fill="none" stroke="#3a3a38" stroke-width="2" opacity="0.32">
<path d="M238 25Q250 100 262 188"/><path d="M330 35Q318 120 300 200"/><path d="M410 70Q380 160 350 240"/><path d="M160 70Q200 120 225 176"/>
<path d="M100 110Q250 95 420 120"/><path d="M70 140Q240 135 470 190"/><path d="M250 62Q350 60 440 85"/><path d="M470 170Q430 230 400 280"/><path d="M300 160Q400 190 500 250"/>
</g>
<path d="M22 148L130 160L215 175L285 195L360 245L450 300L530 335L530 385L470 428L400 402L300 364L235 342L140 322L20 340Z" fill="url(#fg2)"/>
<path d="M22 150L130 162L215 177L208 200L125 186L25 175Z" fill="#27302c"/>
<path d="M285 195L360 245L450 300L530 335L528 352L440 322L350 275L280 222Z" fill="#222a27"/>
<path d="M66 195L196 215L184 262L64 248Z" fill="#71867e" opacity="0.75"/>
<path d="M22 190L62 182L70 250L150 262L138 322L20 342Z" fill="#77736a"/><path d="M70 246L112 252L150 320L128 324Z" fill="#3f4641" opacity="0.8"/><path d="M22 190L50 184L56 336L22 342Z" fill="#5f5a50"/><path d="M138 212L186 222L176 255L130 244Z" fill="#9bb0a7" opacity="0.8"/>
<path d="M300 330L385 352L470 385L478 420L400 398L300 360Z" fill="#8aa39a" opacity="0.85"/>
<path d="M330 300L430 330L428 342L328 312Z" fill="#50635b"/>
<path d="M212 176L266 190L232 340L138 320Z" fill="#c4c4c4"/>
<path d="M266 190L298 202L283 354L232 340Z" fill="#8a9692"/>
<path d="M254 250L296 262L284 352L236 340Z" fill="#6b7f77" opacity="0.9"/>
<path d="M20 340L140 322L235 342L300 364L400 402L470 428L530 390L540 560L0 560Z" fill="url(#fg3)"/>
<ellipse cx="350" cy="410" rx="95" ry="60" fill="url(#fg4)" transform="rotate(20 350 410)"/>
<path d="M30 345L140 326L150 345L40 372Z" fill="#b9b3b3" opacity="0.7"/>
<path d="M146 50L188 34L194 66L158 84Z" fill="#ffffff"/><ellipse cx="170" cy="60" rx="42" ry="36" fill="url(#fg7)"/>
<path d="M409 101L434 82L485 148L465 165Z" fill="#ffffff"/><ellipse cx="448" cy="124" rx="66" ry="74" fill="url(#fg7)"/>
<path d="M91 99L103 95L108 114L97 118Z" fill="#ffffff"/>
<circle cx="305" cy="262" r="7" fill="#f4fff8"/>
<ellipse cx="410" cy="300" rx="12" ry="6" fill="#f4fff8"/><ellipse cx="372" cy="304" rx="9" ry="5" fill="#e8fff0"/><ellipse cx="338" cy="305" rx="6" ry="4" fill="#d8f0e0"/>
<ellipse cx="463" cy="328" rx="8" ry="5" fill="#d8f0e0"/><ellipse cx="511" cy="290" rx="6" ry="10" fill="#e8f4ee"/>
<ellipse cx="166" cy="200" rx="6" ry="4" fill="#dfeee6"/><ellipse cx="134" cy="188" rx="5" ry="3" fill="#cfe0d6"/>
<path d="M488 175L500 170L505 260L492 262Z" fill="#2a2a2a" opacity="0.7"/>
</g>
<circle cx="271" cy="271" r="250" fill="url(#fg5)"/>
</g>
</svg>

<div class="t" style="left:893.8px;top:241px;font-size:10.2px;color:#86bc3c;font-weight:400;letter-spacing:0px;transform:scaleX(0.922);">Rotation</div>
<svg style="left:932.3px;top:244.5px" width="4.4" height="4.4" viewBox="0 0 5 5"><path d="M0.5 4.5L4.3 0.7M1.6 0.6H4.4V3.4" fill="none" stroke="#86bc3c" stroke-width="0.9"/></svg>
</body></html>
